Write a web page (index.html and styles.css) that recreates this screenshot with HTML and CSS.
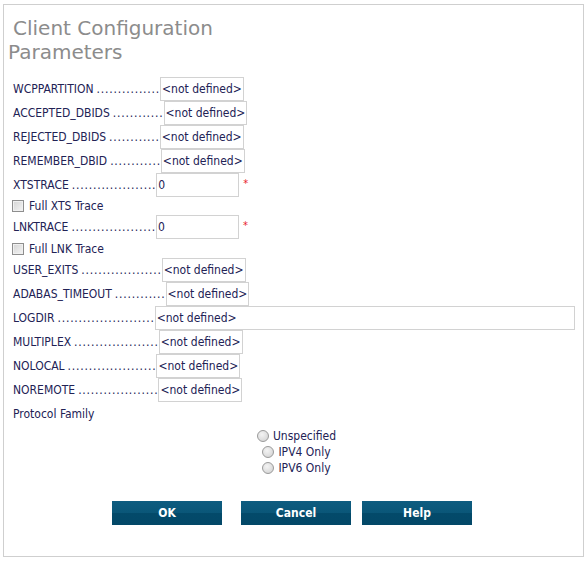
FILE: index.html
```html
<!DOCTYPE html>
<html>
<head>
<meta charset="utf-8">
<title>Client Configuration Parameters</title>
<link rel="stylesheet" href="styles.css">
</head>
<body>
<div class="panel">
  <h1 class="title">Client Configuration Parameters</h1>
  <div class="form">
    <div class="row"><span class="label">WCPPARTITION</span><span class="dots">...............</span><span class="field">&lt;not defined&gt;</span></div>
    <div class="row"><span class="label">ACCEPTED_DBIDS</span><span class="dots">............</span><span class="field">&lt;not defined&gt;</span></div>
    <div class="row"><span class="label">REJECTED_DBIDS</span><span class="dots">............</span><span class="field">&lt;not defined&gt;</span></div>
    <div class="row"><span class="label">REMEMBER_DBID</span><span class="dots">............</span><span class="field">&lt;not defined&gt;</span></div>
    <div class="row"><span class="label">XTSTRACE</span><span class="dots">....................</span><span class="field field-num">0</span><span class="req">*</span></div>
    <div class="check-row check-row-a"><span class="checkbox"></span><span class="check-label">Full XTS Trace</span></div>
    <div class="row"><span class="label">LNKTRACE</span><span class="dots">....................</span><span class="field field-num">0</span><span class="req">*</span></div>
    <div class="check-row check-row-b"><span class="checkbox"></span><span class="check-label">Full LNK Trace</span></div>
    <div class="row"><span class="label">USER_EXITS</span><span class="dots">...................</span><span class="field">&lt;not defined&gt;</span></div>
    <div class="row"><span class="label">ADABAS_TIMEOUT</span><span class="dots">............</span><span class="field">&lt;not defined&gt;</span></div>
    <div class="row"><span class="label">LOGDIR</span><span class="dots">.......................</span><span class="field field-wide">&lt;not defined&gt;</span></div>
    <div class="row"><span class="label">MULTIPLEX</span><span class="dots">....................</span><span class="field">&lt;not defined&gt;</span></div>
    <div class="row"><span class="label">NOLOCAL</span><span class="dots">.....................</span><span class="field">&lt;not defined&gt;</span></div>
    <div class="row"><span class="label">NOREMOTE</span><span class="dots">...................</span><span class="field">&lt;not defined&gt;</span></div>
    <div class="row"><span class="label">Protocol Family</span></div>
  </div>
  <div class="radios">
    <div class="radio-line"><span class="radio"></span><span class="radio-label">Unspecified</span></div>
    <div class="radio-line"><span class="radio"></span><span class="radio-label">IPV4 Only</span></div>
    <div class="radio-line"><span class="radio"></span><span class="radio-label">IPV6 Only</span></div>
  </div>
  <div class="buttons">
    <button class="btn">OK</button>
    <button class="btn btn-cancel">Cancel</button>
    <button class="btn">Help</button>
  </div>
</div>
</body>
</html>
```

FILE: styles.css
```css
html, body {
  margin: 0;
  padding: 0;
  background: #ffffff;
}
body {
  font-family: "DejaVu Sans Condensed", "DejaVu Sans", sans-serif;
  font-size: 12px;
  color: #222255;
}
.panel {
  box-sizing: border-box;
  margin: 4px 0 0 3px;
  width: 581px;
  height: 553px;
  border: 1px solid #cfcfcf;
  padding: 11px 0 0 4px;
}
.title {
  margin: 0;
  width: 240px;
  font-family: "DejaVu Sans", sans-serif;
  font-weight: normal;
  font-size: 20px;
  line-height: 24px;
  color: #8c8c8c;
  text-indent: 5px;
}
.form {
  margin-top: 13px;
  padding-left: 5px;
}
.row {
  display: flex;
  align-items: center;
  height: 24px;
  white-space: nowrap;
}
.dots {
  letter-spacing: 0.8px;
  margin-left: 3px;
}
.field {
  box-sizing: border-box;
  height: 24px;
  line-height: 22px;
  border: 1px solid #d2d2d2;
  padding: 0 1px 0 1px;
  background: #ffffff;
}
.field-num {
  width: 83px;
}
.field-wide {
  width: 420px;
}
.req {
  color: #e8202a;
  font-size: 11px;
  align-self: flex-start;
  margin: 5px 0 0 4px;
  line-height: 11px;
}
.check-row {
  display: flex;
  align-items: center;
  margin-left: -1px;
}
.check-row-a { height: 18px; }
.check-row-b { height: 19px; }
.checkbox {
  box-sizing: border-box;
  width: 12px;
  height: 12px;
  border: 1px solid #8e8e8e;
  background: linear-gradient(135deg, #d4d4d4, #f4f4f4);
  box-shadow: inset 0 0 0 1px #f0f0f0;
}
.check-label {
  margin-left: 5px;
}
.radios {
  margin-top: 2px;
  padding-left: 2px;
  display: flex;
  flex-direction: column;
  align-items: center;
}
.radio-line {
  display: flex;
  align-items: center;
  height: 16px;
}
.radio {
  box-sizing: border-box;
  width: 12px;
  height: 12px;
  border-radius: 50%;
  border: 1px solid #9a9a9a;
  background: radial-gradient(circle at 40% 35%, #f4f4f4, #cfcfcf);
}
.radio-label {
  margin-left: 4px;
}
.buttons {
  display: flex;
  margin-top: 25px;
  padding-left: 104px;
  gap: 11px;
}
.btn {
  width: 110px;
  height: 24px;
  border: none;
  padding: 0;
  font-family: "DejaVu Sans Condensed", "DejaVu Sans", sans-serif;
  font-size: 12px;
  font-weight: bold;
  color: #ffffff;
  background: linear-gradient(#0e5c80 0%, #0a5678 50%, #034a6a 52%, #034868 100%);
  cursor: pointer;
}
.btn-cancel {
  margin-left: 8px;
}
```
